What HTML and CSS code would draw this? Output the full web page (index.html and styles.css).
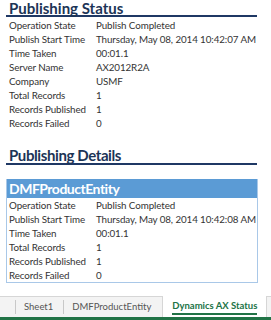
FILE: index.html
```html
<!DOCTYPE html>
<html lang="en">

<head>
  <meta charset="UTF-8">
  <meta name="viewport" content="width=device-width, initial-scale=1.0">
  <title>Dynamics AX Status</title>
  <link rel="stylesheet" href="styles.css">
</head>

<body>
  <div class="sheet">
    <h2 class="section-title">Publishing Status</h2>
    <div class="rows">
      <div class="row"><span class="label">Operation State</span><span>Publish Completed</span></div>
      <div class="row"><span class="label">Publish Start Time</span><span>Thursday, May 08, 2014 10:42:07 AM</span></div>
      <div class="row"><span class="label">Time Taken</span><span>00:01.1</span></div>
      <div class="row"><span class="label">Server Name</span><span>AX2012R2A</span></div>
      <div class="row"><span class="label">Company</span><span>USMF</span></div>
      <div class="row"><span class="label">Total Records</span><span>1</span></div>
      <div class="row"><span class="label">Records Published</span><span>1</span></div>
      <div class="row"><span class="label">Records Failed</span><span>0</span></div>
    </div>

    <h2 class="section-title second">Publishing Details</h2>
    <div class="entity-box">
      <div class="entity-header">DMFProductEntity</div>
      <div class="row"><span class="label">Operation State</span><span>Publish Completed</span></div>
      <div class="row"><span class="label">Publish Start Time</span><span>Thursday, May 08, 2014 10:42:08 AM</span></div>
      <div class="row"><span class="label">Time Taken</span><span>00:01.1</span></div>
      <div class="row"><span class="label">Total Records</span><span>1</span></div>
      <div class="row"><span class="label">Records Published</span><span>1</span></div>
      <div class="row"><span class="label">Records Failed</span><span>0</span></div>
    </div>
  </div>

  <div class="tabs">
    <div class="tab">Sheet1</div>
    <div class="tab">DMFProductEntity</div>
    <div class="tab active"><span>Dynamics AX Status</span></div>
  </div>
</body>

</html>
```

FILE: styles.css
```css
body {
  font-family: Lato, "Open Sans", Arial, sans-serif;
  margin: 0;
  padding: 0;
  background-color: #fff;
  color: #333;
  width: 271px;
  height: 320px;
  overflow: hidden;
  display: flex;
  flex-direction: column;
}

.sheet {
  flex: 1;
}

.section-title {
  margin: 0 14px 0 6px;
  padding: 1px 0 0 3px;
  height: 14px;
  line-height: 14px;
  font-size: 15px;
  font-weight: bold;
  color: #1c3456;
  border-bottom: 2px solid #1f3864;
  white-space: nowrap;
}

.section-title.second {
  margin-top: 17px;
  height: 15px;
  line-height: 15px;
  letter-spacing: -0.4px;
}

.rows {
  padding-top: 1px;
}

.row {
  display: flex;
  height: 14px;
  line-height: 14px;
  font-size: 9.8px;
  letter-spacing: -0.1px;
  padding-left: 9px;
  white-space: nowrap;
}

.label {
  width: 87px;
  flex-shrink: 0;
}

.entity-box {
  margin: 14px 13px 0 6px;
  border: 1px solid #a9c8e8;
  border-top: none;
}

.entity-box .row {
  padding-left: 2px;
}

.entity-header {
  height: 19px;
  line-height: 19px;
  background-color: #5b9bd5;
  color: #fff;
  font-size: 14px;
  font-weight: bold;
  letter-spacing: -0.5px;
  padding-left: 2px;
  white-space: nowrap;
}

.tabs {
  display: flex;
  height: 20px;
  background-color: #f3f3f3;
  border-top: 1px solid #d6d6d6;
  border-bottom: 3px solid #217346;
  padding-left: 15px;
  font-size: 9.5px;
  color: #555;
  white-space: nowrap;
}

.tab {
  padding: 0 10px 0 8px;
  border-left: 1px solid #c8c8c8;
  margin: 3px 0;
  line-height: 14px;
}

.tab.active {
  margin: -1px 0 0 1px;
  background-color: #fff;
  border-left: 1px solid #d6d6d6;
  border-right: 1px solid #d6d6d6;
  color: #217346;
  font-weight: bold;
  padding: 0 9px;
  line-height: 19px;
}

.tab.active span {
  display: inline-block;
  line-height: 15px;
  border-bottom: 2px solid #217346;
}
```
